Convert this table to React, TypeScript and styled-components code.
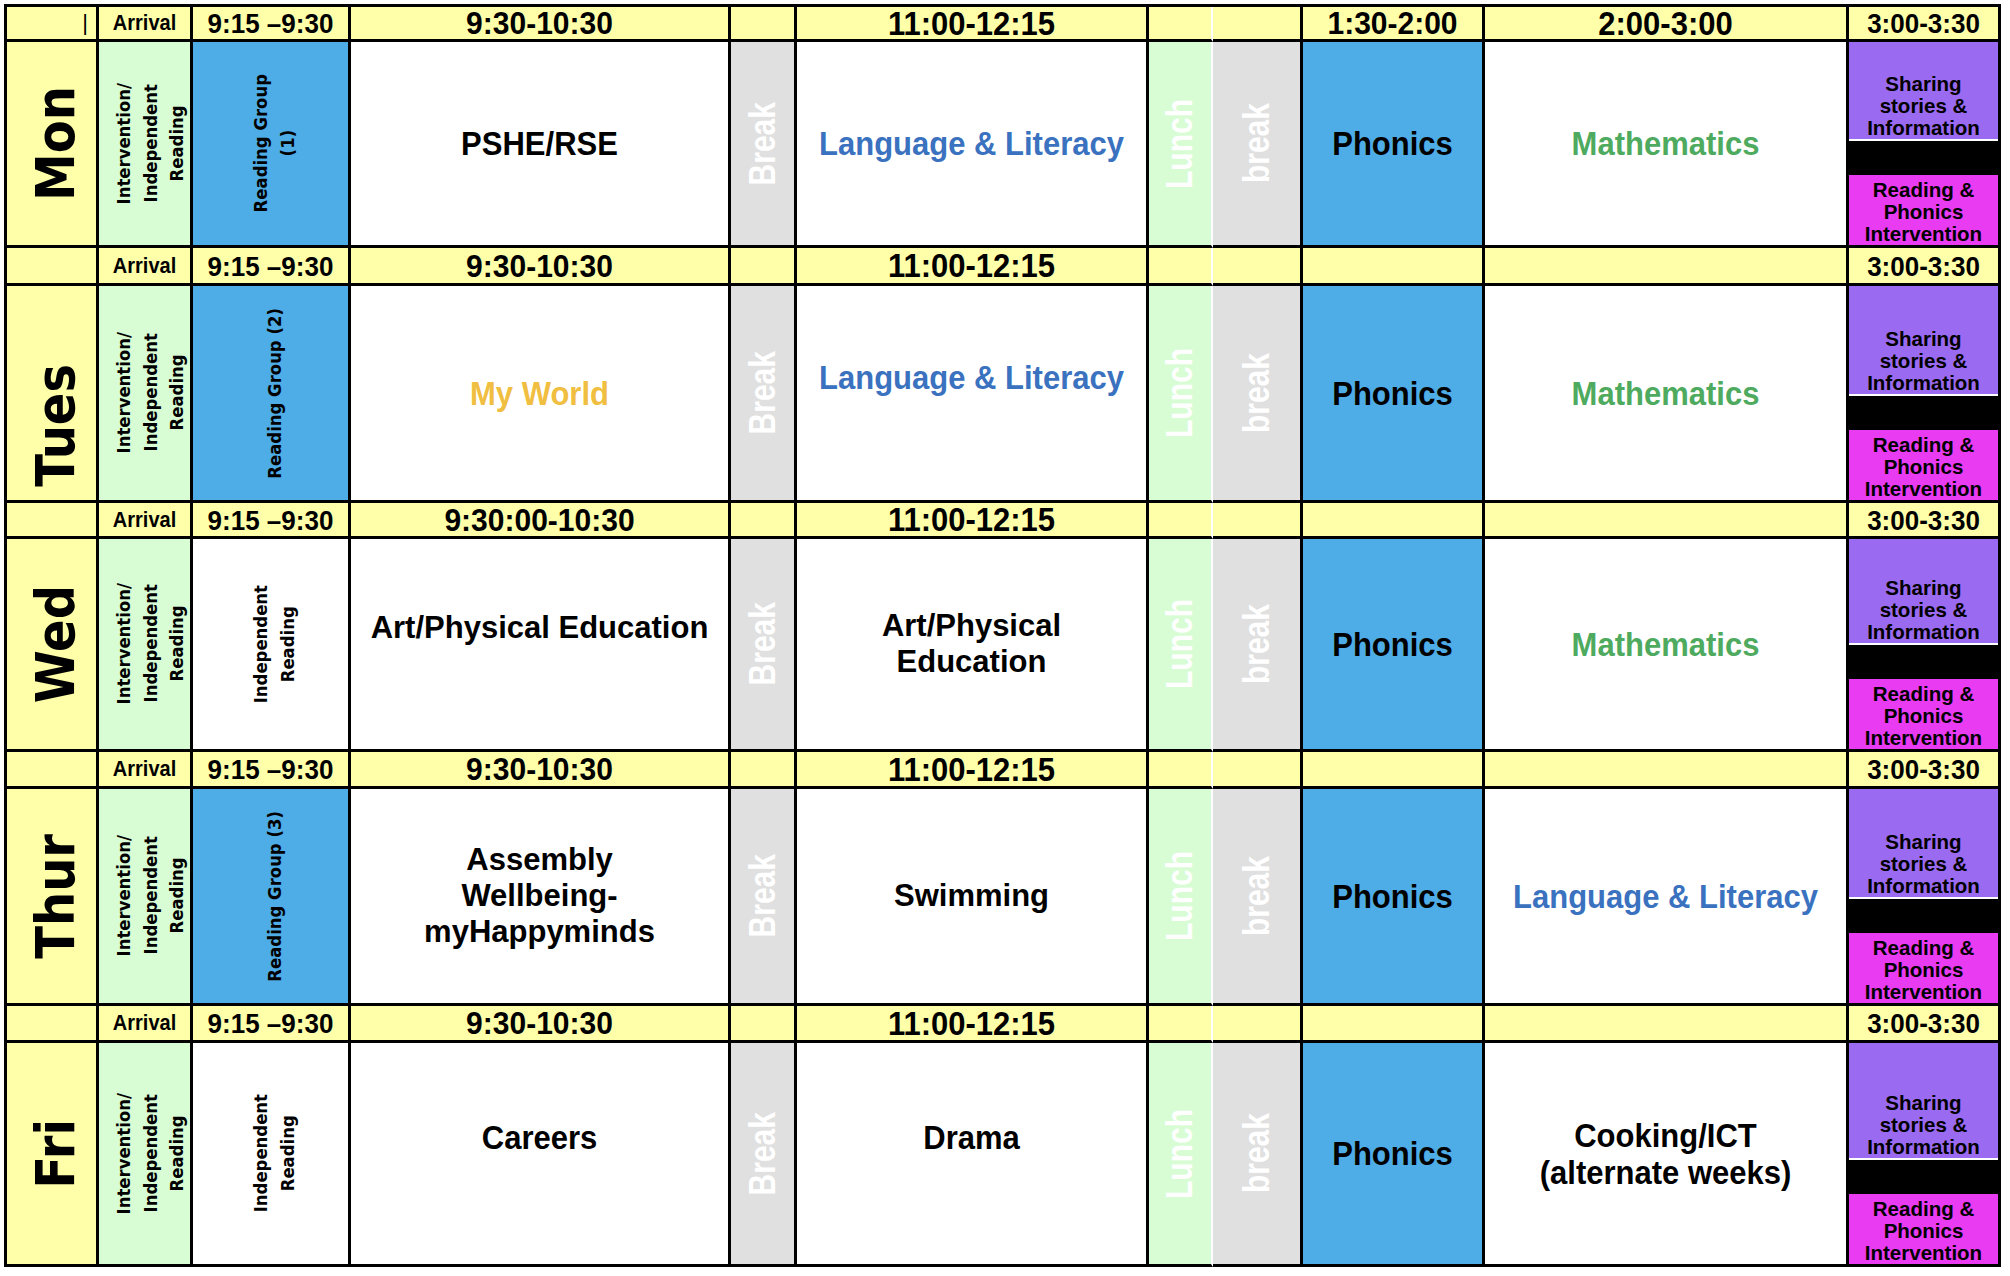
import React from 'react';
import styled, { createGlobalStyle } from 'styled-components';

const GlobalStyle = createGlobalStyle`
  html, body { margin: 0; padding: 0; background: #ffffff; }
  body { font-family: "Liberation Sans", Arial, sans-serif; color: #000; }
`;

const COLS = [92, 94, 158, 380, 66, 352, 64, 90, 182, 364, 152];
const ROWS = [35, 206, 38, 217, 36, 213, 37, 217, 37, 224];

const C = {
  yellow: '#FFFFAA',
  green: '#D8FDD4',
  blue: '#4EACE6',
  grey: '#E0E0E0',
  white: '#FFFFFF',
  purple: '#9A6AF1',
  magenta: '#E83BF2',
  textBlue: '#3A72C0',
  textGreen: '#4EAA5E',
  textGold: '#F0BE40',
};

const Page = styled.div`
  padding: 4px 0 0 4px;
`;

const Grid = styled.div`
  display: grid;
  grid-template-columns: ${COLS.map((c) => `${c}px`).join(' ')};
  grid-template-rows: ${ROWS.map((r) => `${r}px`).join(' ')};
  width: max-content;
  border-left: 3px solid #000;
  border-top: 3px solid #000;
  background: #ffffff;
`;

const Cell = styled.div<{ $bg: string; $dashed?: boolean; $end?: boolean }>`
  box-sizing: border-box;
  min-width: 0;
  display: flex;
  align-items: center;
  justify-content: ${(p) => (p.$end ? 'flex-end' : 'center')};
  padding-right: ${(p) => (p.$end ? '8px' : '0')};
  text-align: center;
  border-bottom: 3px solid #000;
  border-right: ${(p) => (p.$dashed ? '2px solid transparent' : '3px solid #000')};
  background-color: ${(p) => p.$bg};
  background-clip: padding-box;
  ${(p) =>
    p.$dashed
      ? `
    background-image: repeating-linear-gradient(to bottom, #000 0 10px, transparent 10px 15px);
    background-size: 2px 100%;
    background-position: right top;
    background-repeat: no-repeat;
    background-origin: border-box;
  `
      : ''}
`;

const SplitCell = styled.div`
  box-sizing: border-box;
  min-width: 0;
  overflow: hidden;
  display: flex;
  flex-direction: column;
  border-right: 3px solid #000;
  border-bottom: 3px solid #000;
  background: #000;
  text-align: center;
  font-weight: 700;
  font-size: 20.5px;
  line-height: 22px;
  white-space: nowrap;
`;

const Sharing = styled.div`
  flex: 1;
  display: flex;
  flex-direction: column;
  justify-content: flex-end;
  background: ${C.purple};
  border-bottom: 2px solid #fff;
`;

const Divider = styled.div`
  height: 34px;
  background: #000;
`;

const Catchup = styled.div`
  height: 70px;
  box-sizing: border-box;
  padding-top: 4px;
  overflow: hidden;
  background: ${C.magenta};
`;

const Caret = styled.span`
  font-size: 22px;
  font-weight: 400;
  line-height: 1;
`;

const Time = styled.div<{ $size: number }>`
  font-weight: 700;
  font-size: ${(p) => p.$size}px;
  line-height: 1;
  white-space: nowrap;
  transform: scaleY(1.06);
`;

const Subject = styled.div<{ $color?: string; $tall?: boolean; $lift?: boolean }>`
  font-weight: 700;
  font-size: 31px;
  line-height: ${(p) => (p.$tall ? '33px' : '36px')};
  white-space: nowrap;
  color: ${(p) => p.$color || '#000'};
  transform: ${(p) => (p.$tall ? 'scaleY(1.1)' : 'none')};
  margin-bottom: ${(p) => (p.$lift ? '32px' : '0')};
`;

const Vertical = styled.div`
  writing-mode: vertical-rl;
  white-space: nowrap;
  text-align: center;
`;

const DayName = styled(Vertical)<{ $drop: number }>`
  font-family: "DejaVu Sans", sans-serif;
  font-weight: 700;
  font-size: 48px;
  line-height: 1;
  margin-left: 6px;
  margin-top: ${(p) => p.$drop}px;
  transform: rotate(180deg) scaleX(1.1);
`;

const SideNote = styled(Vertical)<{ $shift: number }>`
  font-family: "DejaVu Sans", sans-serif;
  font-weight: 700;
  font-size: 16.5px;
  line-height: 24px;
  margin-left: ${(p) => p.$shift}px;
  transform: rotate(180deg) scaleX(1.12);
`;

const PauseLabel = styled(Vertical)`
  font-weight: 700;
  font-size: 30px;
  line-height: 1;
  color: #fff;
  transform: rotate(180deg) scaleX(1.2);
`;

function Lines({ lines }: { lines: string[] }) {
  return (
    <>
      {lines.map((l, i) => (
        <React.Fragment key={i}>
          {i > 0 && <br />}
          {l}
        </React.Fragment>
      ))}
    </>
  );
}

type Lesson = { lines: string[]; color?: string; tall?: boolean; lift?: boolean };
type Day = {
  day: string;
  drop?: number;
  morningTime: string;
  group: { lines: string[]; blue: boolean };
  am: Lesson;
  mid: Lesson;
  pm: Lesson;
};

const DAYS: Day[] = [
  {
    day: 'Mon',
    morningTime: '9:30-10:30',
    group: { lines: ['Reading Group', '(1)'], blue: true },
    am: { lines: ['PSHE/RSE'], tall: true },
    mid: { lines: ['Language & Literacy'], color: C.textBlue, tall: true },
    pm: { lines: ['Mathematics'], color: C.textGreen, tall: true },
  },
  {
    day: 'Tues',
    drop: 64,
    morningTime: '9:30-10:30',
    group: { lines: ['Reading Group (2)'], blue: true },
    am: { lines: ['My World'], color: C.textGold, tall: true },
    mid: { lines: ['Language & Literacy'], color: C.textBlue, tall: true, lift: true },
    pm: { lines: ['Mathematics'], color: C.textGreen, tall: true },
  },
  {
    day: 'Wed',
    morningTime: '9:30:00-10:30',
    group: { lines: ['Independent', 'Reading'], blue: false },
    am: { lines: ['Art/Physical Education'], lift: true },
    mid: { lines: ['Art/Physical', 'Education'] },
    pm: { lines: ['Mathematics'], color: C.textGreen, tall: true },
  },
  {
    day: 'Thur',
    morningTime: '9:30-10:30',
    group: { lines: ['Reading Group (3)'], blue: true },
    am: { lines: ['Assembly', 'Wellbeing-', 'myHappyminds'] },
    mid: { lines: ['Swimming'] },
    pm: { lines: ['Language & Literacy'], color: C.textBlue, tall: true },
  },
  {
    day: 'Fri',
    morningTime: '9:30-10:30',
    group: { lines: ['Independent', 'Reading'], blue: false },
    am: { lines: ['Careers'], tall: true, lift: true },
    mid: { lines: ['Drama'], tall: true, lift: true },
    pm: { lines: ['Cooking/ICT', '(alternate weeks)'], tall: true },
  },
];

function LessonText({ lesson }: { lesson: Lesson }) {
  return (
    <Subject $color={lesson.color} $tall={lesson.tall} $lift={lesson.lift}>
      <Lines lines={lesson.lines} />
    </Subject>
  );
}

function HeaderRow({ first, morningTime }: { first: boolean; morningTime: string }) {
  return (
    <>
      <Cell $bg={C.yellow} $end>{first && <Caret>|</Caret>}</Cell>
      <Cell $bg={C.yellow}><Time $size={20}>Arrival</Time></Cell>
      <Cell $bg={C.yellow}><Time $size={26}>9:15 –9:30</Time></Cell>
      <Cell $bg={C.yellow}><Time $size={30}>{morningTime}</Time></Cell>
      <Cell $bg={C.yellow} />
      <Cell $bg={C.yellow}><Time $size={31}>11:00-12:15</Time></Cell>
      <Cell $bg={C.yellow} $dashed />
      <Cell $bg={C.yellow} />
      <Cell $bg={C.yellow}>{first && <Time $size={30}>1:30-2:00</Time>}</Cell>
      <Cell $bg={C.yellow}>{first && <Time $size={31}>2:00-3:00</Time>}</Cell>
      <Cell $bg={C.yellow}><Time $size={26}>3:00-3:30</Time></Cell>
    </>
  );
}

function DayRow({ d }: { d: Day }) {
  return (
    <>
      <Cell $bg={C.yellow}><DayName $drop={d.drop || 0}>{d.day}</DayName></Cell>
      <Cell $bg={C.green}>
        <SideNote $shift={12}><Lines lines={['Intervention/', 'Independent', 'Reading']} /></SideNote>
      </Cell>
      <Cell $bg={d.group.blue ? C.blue : C.white}>
        <SideNote $shift={8}><Lines lines={d.group.lines} /></SideNote>
      </Cell>
      <Cell $bg={C.white}><LessonText lesson={d.am} /></Cell>
      <Cell $bg={C.grey}><PauseLabel>Break</PauseLabel></Cell>
      <Cell $bg={C.white}><LessonText lesson={d.mid} /></Cell>
      <Cell $bg={C.green} $dashed><PauseLabel>Lunch</PauseLabel></Cell>
      <Cell $bg={C.grey}><PauseLabel>break</PauseLabel></Cell>
      <Cell $bg={C.blue}><Subject $tall>Phonics</Subject></Cell>
      <Cell $bg={C.white}><LessonText lesson={d.pm} /></Cell>
      <SplitCell>
        <Sharing><Lines lines={['Sharing', 'stories &', 'Information']} /></Sharing>
        <Divider />
        <Catchup><Lines lines={['Reading &', 'Phonics', 'Intervention']} /></Catchup>
      </SplitCell>
    </>
  );
}

export default function App() {
  return (
    <Page>
      <GlobalStyle />
      <Grid>
        {DAYS.map((d, i) => (
          <React.Fragment key={d.day}>
            <HeaderRow first={i === 0} morningTime={d.morningTime} />
            <DayRow d={d} />
          </React.Fragment>
        ))}
      </Grid>
    </Page>
  );
}
